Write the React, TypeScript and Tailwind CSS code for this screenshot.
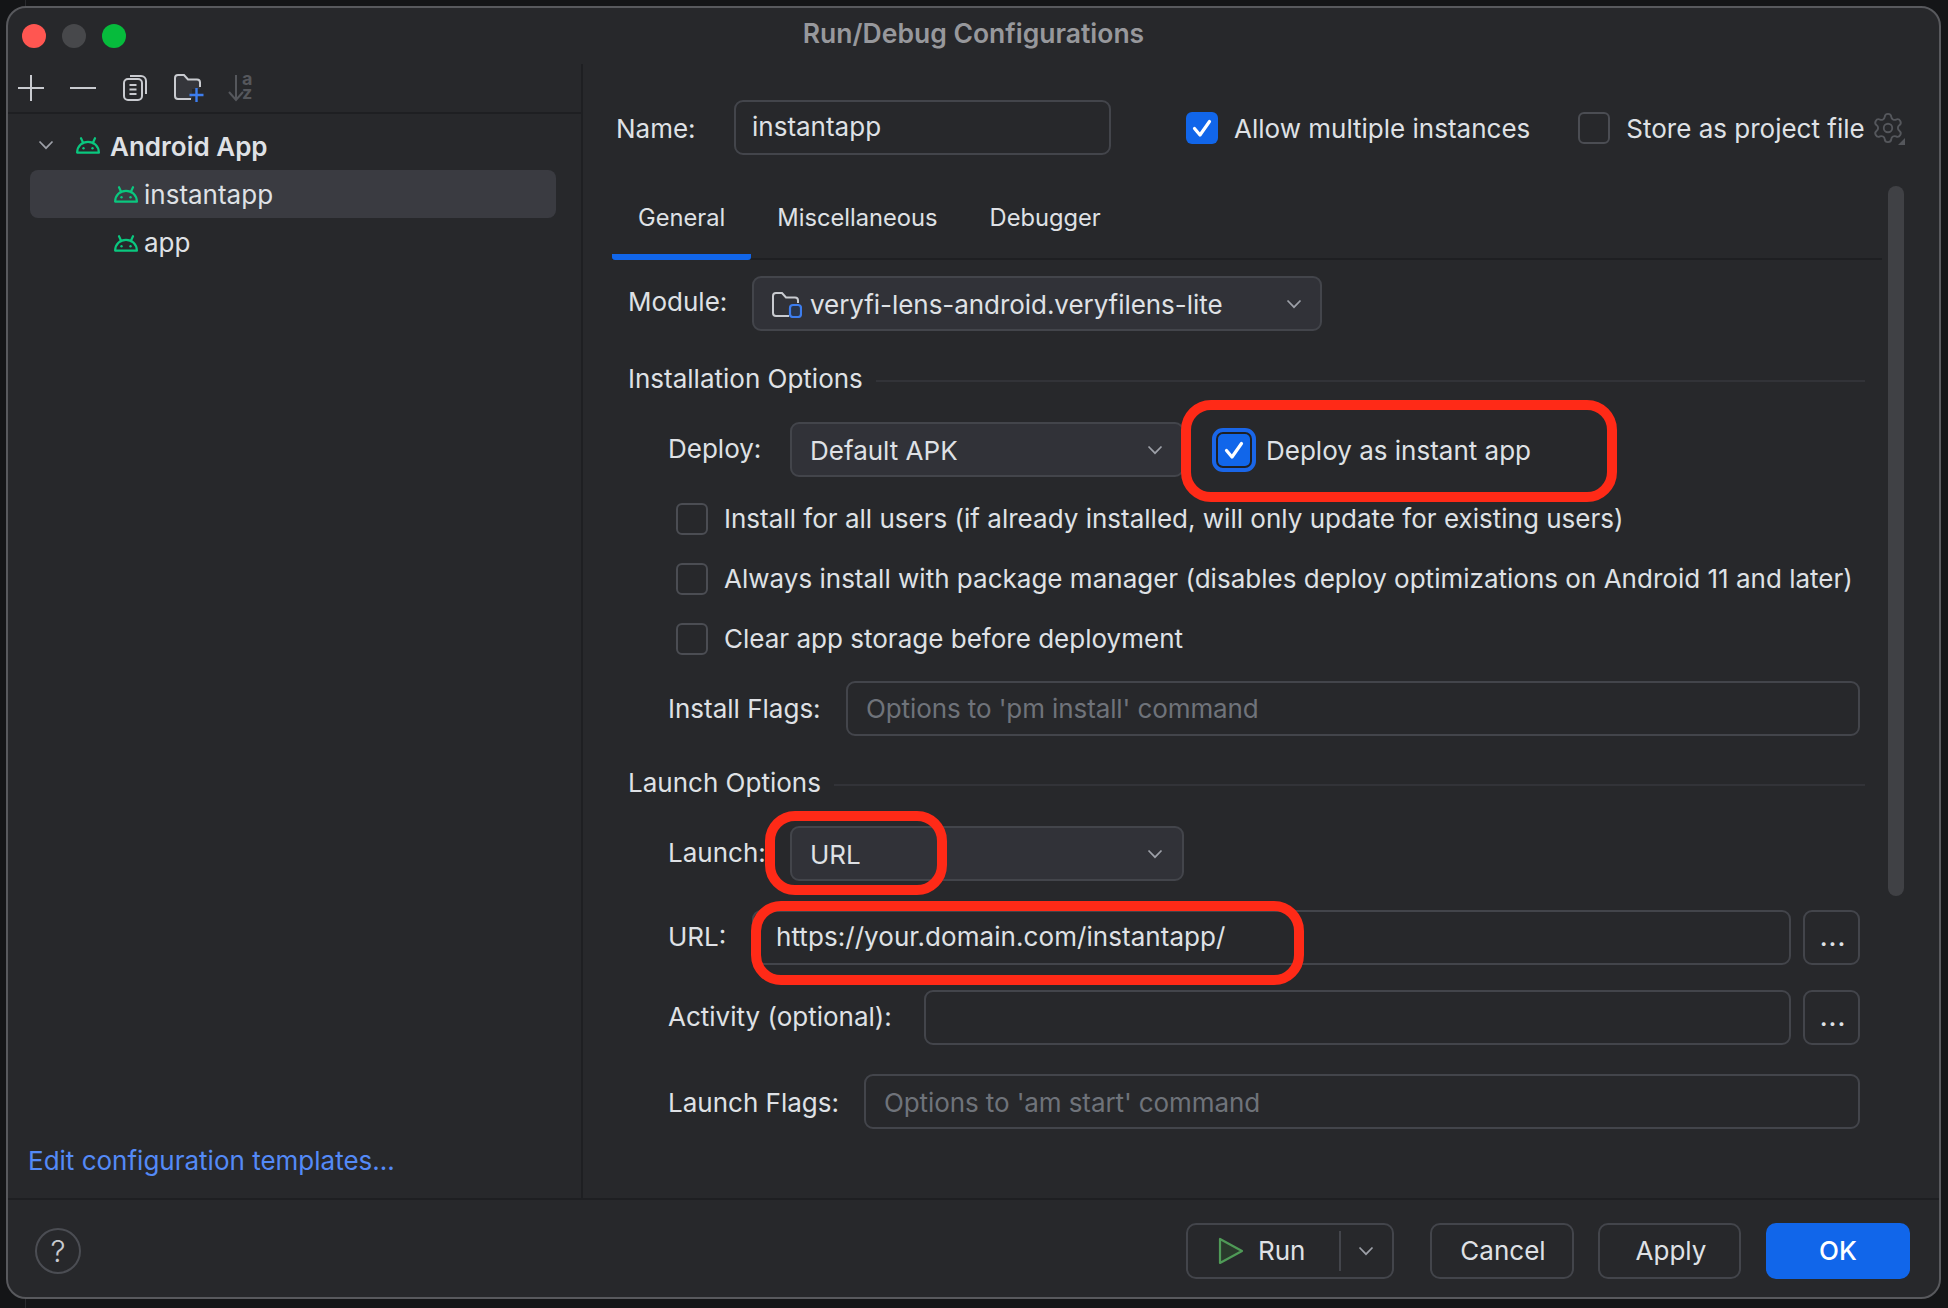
import React from "react";
import { Settings } from "lucide-react";

function Android() {
  return (
    <svg width="24" height="17" viewBox="0 0 24 17" fill="none" className="shrink-0" stroke="#0ac77f" strokeWidth="2.200" strokeLinecap="round" strokeLinejoin="round">
      <path d="M1.100 15.600C1.300 9 6 4.800 12 4.800s10.700 4.200 10.900 10.800Z" />
      <path d="M7.200 6 5 1.200M16.800 6 19 1.200" />
      <circle cx="7.500" cy="11.200" r="1.200" fill="#0ac77f" stroke="none" />
      <circle cx="16.500" cy="11.200" r="1.200" fill="#0ac77f" stroke="none" />
    </svg>
  );
}

function Chevron({ className = "" }: { className?: string }) {
  return (
    <svg width="16" height="10" viewBox="0 0 16 10" fill="none" stroke="#9da0a8" strokeWidth="1.700" className={className}>
      <path d="M1.500 1.500 8 8.200l6.500-6.700" />
    </svg>
  );
}

function CheckMark() {
  return (
    <svg width="24" height="24" viewBox="0 0 24 24" fill="none" stroke="#fff" strokeWidth="3.200" strokeLinecap="round" strokeLinejoin="round">
      <path d="M4.500 12.500 10 19 19.500 5.500" />
    </svg>
  );
}

function Box({ on = false }: { on?: boolean }) {
  return on ? (
    <span className="flex w-8 h-8 rounded-[6px] bg-[#1166ea] items-center justify-center shrink-0">
      <CheckMark />
    </span>
  ) : (
    <span className="block w-8 h-8 rounded-[6px] border-2 border-[#4b4d53] shrink-0" />
  );
}

function Combo({ w, children, right }: { w: string; children: React.ReactNode; right: string }) {
  return (
    <div className={`${w} h-[55px] shrink-0 rounded-[9px] border-2 border-[#43454b] bg-[#313238] flex items-center pl-[18px] text-[#dfe1e5]`}>
      <div className="flex items-center flex-1 pt-[2px]">{children}</div>
      <Chevron className={right} />
    </div>
  );
}

function Field({ w, value, placeholder, pl = "pl-[18px]", shift = "" }: { w: string; value?: string; placeholder?: string; pl?: string; shift?: string }) {
  return (
    <div className={`${w} h-[55px] shrink-0 rounded-[9px] border-2 border-[#43454b] flex items-center ${pl} ${shift} ${placeholder ? "text-[#6f737a] tracking-[-0.1px]" : "text-[#dfe1e5] pb-[2px]"}`}>
      {value ?? placeholder}
    </div>
  );
}

function Heading({ label }: { label: string }) {
  return (
    <div className="flex items-center h-[30px] w-[1237px] ml-[45px] gap-[13px]">
      <span className="whitespace-nowrap">{label}</span>
      <span className="flex-1 h-[2px] bg-[#323338] mt-[4px]" />
    </div>
  );
}

function CheckRow({ label, mt }: { label: string; mt: string }) {
  return (
    <div className={`${mt} ml-[93px] h-8 flex items-center gap-[16px] whitespace-nowrap`}>
      <Box />
      <span className="tracking-[0.01px]">{label}</span>
    </div>
  );
}

function Dots() {
  return (
    <div className="w-[57px] h-[55px] ml-[12px] shrink-0 rounded-[9px] border-2 border-[#43454b] flex items-center justify-center text-[#dfe1e5] pb-[2px] pl-[3px] tracking-[1px] font-medium">
      ...
    </div>
  );
}

function Btn({ children, primary, w, extra = "" }: { children: React.ReactNode; primary?: boolean; w: string; extra?: string }) {
  return (
    <div className={`${w} ${extra} h-[56px] rounded-[10px] flex items-center justify-center ${primary ? "bg-[#1166ea] text-white font-medium" : "border-2 border-[#43454b] text-[#dfe1e5]"}`}>
      {children}
    </div>
  );
}

function Toolbar() {
  return (
    <div className="h-[50px] border-b-2 border-[#1e1f22] flex items-center pl-[10px] shrink-0 gap-[26px]">
      <svg width="26" height="26" viewBox="0 0 26 26" stroke="#c9cbd0" strokeWidth="2"><path d="M13 0v26M0 13h26" /></svg>
      <svg width="26" height="26" viewBox="0 0 26 26" stroke="#c9cbd0" strokeWidth="2"><path d="M0 13h26" /></svg>
      <svg width="24" height="26" viewBox="0 0 24 26" fill="none" stroke="#c9cbd0" strokeWidth="2" className="ml-[1px]">
        <rect x="1" y="4" width="18" height="21" rx="4" />
        <path d="M7 1h11a5 5 0 0 1 5 5v13" />
        <path d="M6.500 10h7M6.500 14.500h7M6.500 19h7" />
      </svg>
      <svg width="30" height="28" viewBox="0 0 30 28" fill="none" className="ml-[1px]">
        <path d="M3 1h7l4 4.500h9a3 3 0 0 1 3 3V15H18v10H4a3 3 0 0 1-3-3V3a2 2 0 0 1 2-2Z" fill="#35363b" />
        <path d="M17 25H4a3 3 0 0 1-3-3V4a3 3 0 0 1 3-3h6l4 4.500h9a3 3 0 0 1 3 3V13" stroke="#c9cbd0" strokeWidth="2" />
        <path d="M22.500 14v14M15.500 21h14" stroke="#3d7dee" strokeWidth="2.400" />
      </svg>
      <div className="relative w-[26px] h-[28px] -ml-[2px]">
        <svg width="16" height="28" viewBox="0 0 16 28" fill="none">
          <path d="M8 1v25M1 18l7 8 7-8" stroke="#55575c" strokeWidth="2" />
        </svg>
        <span className="absolute left-[14px] -top-[2px] w-[12px] text-[18px] leading-[14px] font-bold text-[#55575c] whitespace-pre-line">{"a\nz"}</span>
      </div>
    </div>
  );
}

function Sidebar() {
  return (
    <div className="w-[575px] border-r-2 border-[#1e1f22] flex flex-col shrink-0 text-[#dfe1e5]">
      <Toolbar />
      <div className="flex items-center h-[56px] pl-[30px] pt-[6px] font-semibold">
        <Chevron />
        <span className="ml-[22px]"><Android /></span>
        <span className="ml-[10px] pt-[3px]">Android App</span>
      </div>
      <div className="ml-[22px] w-[526px] h-[48px] rounded-[8px] bg-[#3a3b41] flex items-center pl-[84px] gap-[6px]">
        <Android />
        <span className="pt-[2px]">instantapp</span>
      </div>
      <div className="ml-[22px] h-[50px] flex items-center pl-[84px] gap-[6px]">
        <Android />
        <span>app</span>
      </div>
      <div className="mt-auto mb-[21px] ml-[20px] text-[#548af7]">Edit configuration templates...</div>
    </div>
  );
}

function Panel() {
  return (
    <div className="flex-1 flex flex-col min-w-0 text-[#dfe1e5] whitespace-nowrap">
      <div className="mt-[36px] ml-[33px] h-[55px] flex items-center">
        <span className="w-[118px] pt-[2px]">Name:</span>
        <Field w="w-[377px]" value="instantapp" pl="pl-[16px]" />
        <span className="ml-[75px]"><Box on /></span>
        <span className="ml-[16px] pt-[3px]">Allow multiple instances</span>
        <span className="ml-[48px]"><Box /></span>
        <span className="ml-[16px] pt-[3px]">Store as project file</span>
        <span className="ml-[6px] relative">
          <Settings size={34} strokeWidth={1.3} color="#55575c" />
          <span className="absolute right-0 bottom-0 w-0 h-0 border-l-[7px] border-l-transparent border-b-[7px] border-b-[#55575c]" />
        </span>
      </div>
      <div className="flex mt-[31px]">
        <div className="w-[1305px] shrink-0 pt-[4px]">
          <div className="ml-[29px] w-[1270px] h-[70px] border-b-2 border-[#1e1f22] flex text-[23.700px]">
            <div className="px-[26px] h-[70px] flex items-center pb-[8px] border-b-[6px] border-[#1166ea] rounded-b-[3px]">General</div>
            <div className="px-[26px] h-[68px] flex items-center pb-[12px]">Miscellaneous</div>
            <div className="px-[26px] h-[68px] flex items-center pb-[12px]">Debugger</div>
          </div>
          <div className="mt-[16px] ml-[45px] flex items-center">
            <span className="w-[124px] pb-[3px]">Module:</span>
            <Combo w="w-[570px]" right="mr-[18px]">
              <svg width="30" height="26" viewBox="0 0 30 26" fill="none" className="mr-[8px]">
                <path d="M17 24H4a3 3 0 0 1-3-3V4a3 3 0 0 1 3-3h6l4 4.500h9a3 3 0 0 1 3 3V11" stroke="#c9cbd0" strokeWidth="2" />
                <rect x="18" y="13" width="11" height="12" rx="3" stroke="#3d7dee" strokeWidth="2.200" fill="#28354c" />
              </svg>
              <span className="tracking-[-0.05px]">veryfi-lens-android.veryfilens-lite</span>
            </Combo>
          </div>
          <div className="mt-[33px]"><Heading label="Installation Options" /></div>
          <div className="mt-[28px] ml-[85px] flex items-center">
            <span className="w-[122px] pb-[2px]">Deploy:</span>
            <Combo w="w-[394px]" right="mr-[19px]">Default APK</Combo>
            <span className="ml-[28px] w-[44px] h-[44px] rounded-[11px] border-[4px] border-[#1a66e8] p-[2px] shrink-0 bg-[#1e2024]">
              <span className="flex w-full h-full rounded-[5px] bg-[#1166ea] items-center justify-center"><CheckMark /></span>
            </span>
            <span className="ml-[10px] pt-[2px]">Deploy as instant app</span>
          </div>
          <CheckRow mt="mt-[26px]" label="Install for all users (if already installed, will only update for existing users)" />
          <CheckRow mt="mt-[28px]" label="Always install with package manager (disables deploy optimizations on Android 11 and later)" />
          <CheckRow mt="mt-[28px]" label="Clear app storage before deployment" />
          <div className="mt-[26px] ml-[85px] flex items-center">
            <span className="w-[178px]">Install Flags:</span>
            <Field w="w-[1014px]" placeholder="Options to 'pm install' command" />
          </div>
          <div className="mt-[32px]"><Heading label="Launch Options" /></div>
          <div className="mt-[28px] ml-[85px] flex items-center">
            <span className="w-[122px] pb-[2px]">Launch:</span>
            <Combo w="w-[394px]" right="mr-[19px]">URL</Combo>
          </div>
          <div className="mt-[29px] ml-[85px] flex items-center">
            <span className="w-[84px] pb-[2px]">URL:</span>
            <div className="w-[1039px] h-[55px] rounded-[9px] border-2 border-[#43454b] flex items-center pl-[22px] pb-[2px] tracking-[0.06px]">https://your.domain.com/instantapp/</div>
            <Dots />
          </div>
          <div className="mt-[25px] ml-[85px] flex items-center">
            <span className="w-[256px] pb-[2px]">Activity (optional):</span>
            <div className="w-[867px] h-[55px] rounded-[9px] border-2 border-[#43454b]" />
            <Dots />
          </div>
          <div className="mt-[29px] ml-[85px] flex items-center">
            <span className="w-[196px] pt-[2px]">Launch Flags:</span>
            <Field w="w-[996px]" placeholder="Options to 'am start' command" shift="pt-[2px]" />
          </div>
        </div>
        <div className="w-[16px] h-[710px] rounded-full bg-[#404145]" />
      </div>
    </div>
  );
}

function Footer() {
  return (
    <div className="h-[99px] border-t-2 border-[#1e1f22] flex items-start pt-[23px] pl-[27px] pr-[29px] text-[#dfe1e5]">
      <div className="w-[46px] h-[46px] mt-[5px] rounded-full border-2 border-[#4b4d53] flex items-center justify-center text-[#c9cbd0] font-light text-[30px]">?</div>
      <div className="ml-auto w-[208px] h-[56px] rounded-[10px] border-2 border-[#43454b] flex items-center">
        <svg width="26" height="28" viewBox="0 0 26 28" className="ml-[30px]" fill="#2a3a2c" stroke="#4f9a57" strokeWidth="2.200" strokeLinejoin="round">
          <path d="M2 2v24L24 14Z" />
        </svg>
        <span className="ml-[14px]">Run</span>
        <span className="ml-[34px] w-[2px] h-[40px] bg-[#43454b]" />
        <Chevron className="ml-[17px]" />
      </div>
      <div className="ml-[36px]"><Btn w="w-[144px]" extra="pl-[2px]">Cancel</Btn></div>
      <div className="ml-[24px]"><Btn w="w-[143px]" extra="pl-[3px]">Apply</Btn></div>
      <div className="ml-[25px]"><Btn w="w-[144px]" primary>OK</Btn></div>
    </div>
  );
}

function Mark({ cls }: { cls: string }) {
  return <div className={`absolute border-[10px] border-[#ff2a17] rounded-[30px] ${cls}`} />;
}

export default function App() {
  return (
    <div className="relative w-[1948px] h-[1308px] bg-[#141517] pt-[6px] pl-[6px] overflow-hidden text-[26px] leading-[32px] font-['Inter',sans-serif]">
      <div className="absolute left-[25px] top-0 bottom-0 w-[1px] bg-[#2a2b2e]" />
      <div className="relative w-[1935px] h-[1293px] rounded-[20px] border-2 border-[#58595d] bg-[#27282b] flex flex-col overflow-hidden">
        <div className="h-[56px] grid grid-cols-[1fr_auto_1fr] items-center shrink-0">
          <div className="flex gap-[16px] pl-[14px]">
            <span className="block w-6 h-6 rounded-full bg-[#ff5651]" />
            <span className="block w-6 h-6 rounded-full bg-[#47484b]" />
            <span className="block w-6 h-6 rounded-full bg-[#06bb3c]" />
          </div>
          <div className="font-semibold text-[#97989c] text-[26.500px] pb-[6px]">Run/Debug Configurations</div>
          <div />
        </div>
        <div className="flex-1 flex min-h-0">
          <Sidebar />
          <Panel />
        </div>
        <Footer />
      </div>
      <Mark cls="left-[1181px] top-[400px] w-[436px] h-[102px]" />
      <Mark cls="left-[765px] top-[811px] w-[182px] h-[84px]" />
      <Mark cls="left-[751px] top-[901px] w-[553px] h-[84px]" />
    </div>
  );
}
